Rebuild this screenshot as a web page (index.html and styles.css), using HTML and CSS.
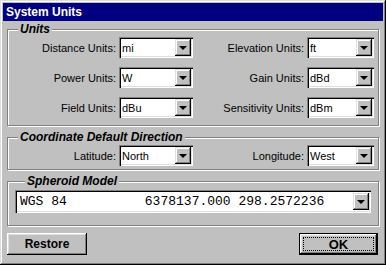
FILE: index.html
```html
<!DOCTYPE html>
<html>
<head>
<meta charset="utf-8">
<link rel="stylesheet" href="styles.css">
</head>
<body>
<div class="window">
  <div class="titlebar">System Units</div>

  <fieldset class="group group-units">
    <legend>Units</legend>
    <div class="grid">
      <label>Distance Units:</label>
      <div class="select"><span class="val">mi</span><span class="arrow"><i></i></span></div>
      <label>Elevation Units:</label>
      <div class="select"><span class="val">ft</span><span class="arrow"><i></i></span></div>

      <label>Power Units:</label>
      <div class="select"><span class="val">W</span><span class="arrow"><i></i></span></div>
      <label>Gain Units:</label>
      <div class="select"><span class="val">dBd</span><span class="arrow"><i></i></span></div>

      <label>Field Units:</label>
      <div class="select"><span class="val">dBu</span><span class="arrow"><i></i></span></div>
      <label>Sensitivity Units:</label>
      <div class="select"><span class="val">dBm</span><span class="arrow"><i></i></span></div>
    </div>
  </fieldset>

  <fieldset class="group group-coord">
    <legend>Coordinate Default Direction</legend>
    <div class="grid">
      <label>Latitude:</label>
      <div class="select"><span class="val">North</span><span class="arrow"><i></i></span></div>
      <label>Longitude:</label>
      <div class="select"><span class="val">West</span><span class="arrow"><i></i></span></div>
    </div>
  </fieldset>

  <fieldset class="group group-spheroid">
    <legend>Spheroid Model</legend>
    <div class="select select-wide"><span class="val mono">WGS 84          6378137.000 298.2572236</span><span class="arrow"><i></i></span></div>
  </fieldset>

  <div class="footer">
    <button class="btn">Restore</button>
    <button class="btn btn-default"><span class="focus">OK</span></button>
  </div>
</div>
</body>
</html>
```

FILE: styles.css
```css
html, body {
  margin: 0;
  padding: 0;
  background: #c0c0c0;
}

body {
  font-family: "Liberation Sans", Arial, sans-serif;
  font-size: 11px;
  color: #000;
}

.window {
  box-sizing: border-box;
  width: 386px;
  height: 265px;
  padding: 3px;
  background: #c0c0c0;
  box-shadow: inset -1px -1px 0 #000, inset 1px 1px 0 #dfdfdf,
              inset -2px -2px 0 #808080, inset 2px 2px 0 #fff;
}

.titlebar {
  height: 18px;
  background: #000080;
  color: #fff;
  font-weight: bold;
  font-size: 12px;
  line-height: 18px;
  padding-left: 3px;
}

.group {
  margin: 1px 4px 0 4px;
  padding: 0;
  border: 1px solid #808080;
  box-shadow: inset 1px 1px 0 #fff, 1px 1px 0 #fff;
  min-width: 0;
}

.group legend {
  margin-left: 10px;
  padding: 0 2px;
  background: #c0c0c0;
  font-weight: bold;
  font-style: italic;
  font-size: 12px;
  line-height: 14px;
}

.group-units {
  padding: 1px 0 7px 0;
}

.group-coord {
  margin-top: 4px;
  padding: 1px 0 3px 0;
}

.group-spheroid {
  margin-top: 4px;
  padding: 2px 7px 12px 7px;
}

.grid {
  display: grid;
  grid-template-columns: 106px 74px 108px 67px;
  column-gap: 3px;
  row-gap: 9px;
  padding-left: 2px;
  align-items: center;
}

.grid label {
  text-align: right;
  white-space: nowrap;
}

.select {
  box-sizing: border-box;
  height: 21px;
  display: flex;
  align-items: center;
  background: #fff;
  padding: 2px;
  box-shadow: inset 1px 1px 0 #808080, inset 2px 2px 0 #000,
              inset -1px -1px 0 #fff, inset -2px -2px 0 #dfdfdf;
}

.select .val {
  flex: 1;
  padding-left: 1px;
  white-space: pre;
  overflow: hidden;
}

.arrow {
  box-sizing: border-box;
  width: 16px;
  height: 17px;
  background: #c0c0c0;
  box-shadow: inset -1px -1px 0 #000, inset 1px 1px 0 #dfdfdf,
              inset -2px -2px 0 #808080, inset 2px 2px 0 #fff;
  display: flex;
  align-items: center;
  justify-content: center;
}

.arrow i {
  width: 0;
  height: 0;
  border-left: 4px solid transparent;
  border-right: 4px solid transparent;
  border-top: 4px solid #000;
  margin-right: 1px;
}

.select-wide {
  height: 23px;
}

.mono {
  font-family: "Liberation Mono", "Courier New", monospace;
  font-size: 13px;
  padding-left: 3px !important;
}

.footer {
  display: flex;
  justify-content: space-between;
  margin: 7px 5px 0 4px;
}

.btn {
  box-sizing: border-box;
  width: 80px;
  height: 22px;
  margin: 0;
  padding: 0;
  border: none;
  background: #c0c0c0;
  font-family: "Liberation Sans", Arial, sans-serif;
  font-weight: bold;
  font-size: 12px;
  color: #000;
  box-shadow: inset -1px -1px 0 #000, inset 1px 1px 0 #fff,
              inset -2px -2px 0 #808080, inset 2px 2px 0 #dfdfdf;
}

.btn-default {
  width: 79px;
  border: 1px solid #000;
  padding: 3px;
  display: flex;
}

.focus {
  flex: 1;
  border: 1px dotted #000;
  display: flex;
  align-items: center;
  justify-content: center;
  font-size: 13px;
}
```
